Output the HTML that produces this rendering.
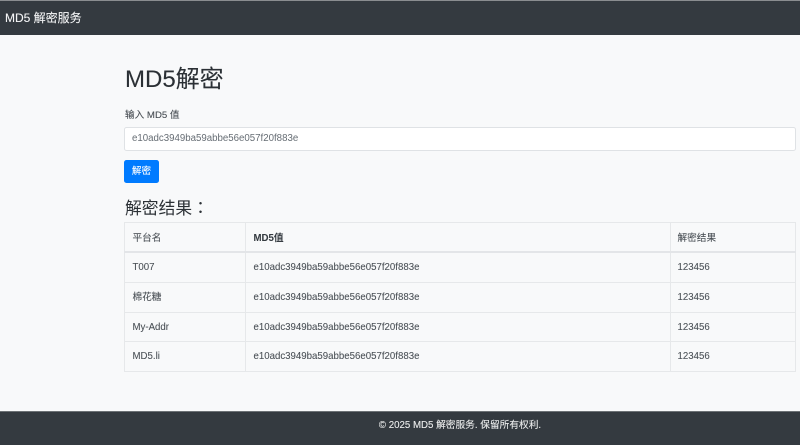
<!DOCTYPE html>
<html lang="zh">
<head>
<meta charset="utf-8">
<title>MD5 解密服务</title>
<style>
html,body{margin:0;padding:0;width:800px;height:445px;overflow:hidden;background:#f8f9fa;}
body{position:relative;font-family:"Liberation Sans","Noto Sans CJK SC",sans-serif;color:#343a40;}
#wrap{position:absolute;left:0;top:0;width:800px;height:445px;filter:blur(0.3px);}
.a{position:absolute;white-space:nowrap;}
#top{left:0;top:0;width:800px;height:1px;background:#8a8d90;}
#nav{left:0;top:1px;width:800px;height:34px;background:#343a40;}
#brand{left:5px;top:10px;font-size:12px;line-height:16px;color:#f4f5f6;-webkit-text-stroke:0.1px #f4f5f6;}
h1,h3{margin:0;font-weight:400;}
#h1{left:125px;top:65px;font-size:24px;line-height:30px;color:#2b3035;-webkit-text-stroke:0.1px #2b3035;}
#lab{left:125px;top:109px;font-size:9.65px;line-height:13px;color:#454b51;-webkit-text-stroke:0.1px #454b51;}
#inp{left:124px;top:127px;width:670px;height:22px;background:#fff;border:1px solid #dfe2e5;border-radius:2.5px;font-size:9.68px;line-height:22px;color:#666d74;text-indent:7px;}
#btn{left:124px;top:160px;width:35px;height:23px;background:#007bff;border-radius:2.5px;color:#fff;font-size:9.6px;line-height:23px;text-align:center;-webkit-text-stroke:0.1px #fff;}
#h3{left:125px;top:198px;font-size:16.8px;line-height:21px;color:#2b3035;font-family:"Liberation Sans","Noto Sans CJK TC",sans-serif;}
table{position:absolute;left:124px;top:222px;width:671px;border-collapse:collapse;table-layout:fixed;font-size:9.66px;line-height:12px;color:#4a5056;-webkit-text-stroke:0.08px #4a5056;}
td,th{border:1px solid #e6e8ea;padding:1px 0 0 7.5px;height:28px;text-align:left;font-weight:400;}
td:last-child,th:last-child{padding-left:6.5px;}
tr:first-child th{height:25px;padding-top:3px;border-bottom:2px solid #e3e5e8;}
tr.s td{height:27px;}
th.b{font-weight:700;color:#343a40;}
#foot{left:0;top:411px;width:800px;height:34px;background:#343a40;border-top:1px solid #6c7175;box-sizing:border-box;}
#ft{left:0;top:418px;width:920px;text-align:center;font-size:9.7px;line-height:13px;color:#eceded;padding-top:0.6px;-webkit-text-stroke:0.1px #eceded;}
</style>
</head>
<body>
<div id="wrap">
<div class="a" id="top"></div>
<div class="a" id="nav"></div>
<div class="a" id="brand">MD5 解密服务</div>
<h1 class="a" id="h1">MD5解密</h1>
<div class="a" id="lab">输入 MD5 值</div>
<div class="a" id="inp">e10adc3949ba59abbe56e057f20f883e</div>
<div class="a" id="btn">解密</div>
<h3 class="a" id="h3" lang="zh-TW">解密结果：</h3>
<table>
<colgroup><col style="width:121px"><col style="width:425px"><col style="width:125px"></colgroup>
<tr><th>平台名</th><th class="b">MD5值</th><th>解密结果</th></tr>
<tr><td>T007</td><td>e10adc3949ba59abbe56e057f20f883e</td><td>123456</td></tr>
<tr><td>棉花糖</td><td>e10adc3949ba59abbe56e057f20f883e</td><td>123456</td></tr>
<tr class="s"><td>My-Addr</td><td>e10adc3949ba59abbe56e057f20f883e</td><td>123456</td></tr>
<tr><td>MD5.li</td><td>e10adc3949ba59abbe56e057f20f883e</td><td>123456</td></tr>
</table>
<div class="a" id="foot"></div>
<div class="a" id="ft">© 2025 MD5 解密服务. 保留所有权利.</div>
</div>
</body>
</html>
